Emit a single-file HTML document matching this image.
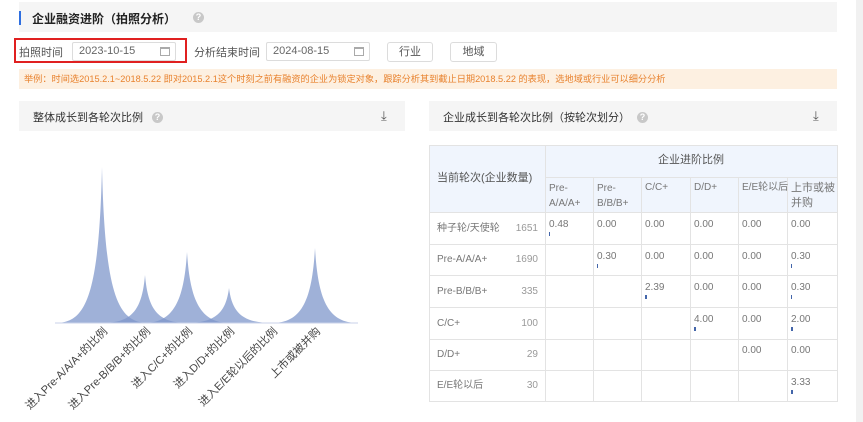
<!DOCTYPE html>
<html><head><meta charset="utf-8"><style>
*{margin:0;padding:0;box-sizing:border-box}
body{width:863px;height:422px;overflow:hidden;background:#fff;font-family:"Liberation Sans","Noto Sans CJK SC",sans-serif;position:relative;color:#333}
.abs{position:absolute;white-space:nowrap}
.bar{background:#f5f5f5}
.q{position:absolute;width:11px;height:11px;border-radius:50%;background:#c8c8c8;color:#fff;font-size:9px;line-height:11px;text-align:center;font-weight:bold}
.inp{position:absolute;border:1px solid #dcdcdc;border-radius:2px;height:19px;font-size:11px;color:#666;line-height:17px;padding-left:6px}
.cal{position:absolute;right:5px;top:4px;width:10px;height:9px;border:1px solid #aaa;border-top-width:2px}
.btn{position:absolute;border:1px solid #dcdcdc;border-radius:3px;height:20px;font-size:11px;color:#555;text-align:center;line-height:18px}
.dl{position:absolute;font-size:13px;color:#555}
.hl{position:absolute;height:1px;background:#e3e3e3}
.vl{position:absolute;width:1px;background:#e3e3e3}
.c{position:absolute;font-size:10px;color:#777;white-space:nowrap;line-height:13px}
.m{position:absolute;width:2px;height:4px;background:#4466aa}
</style></head><body>
<div class="abs" style="right:0;top:0;width:7px;height:422px;background:#f1f1f1"></div>
<div class="abs bar" style="left:19px;top:2px;width:818px;height:30px"></div>
<div class="abs" style="left:19px;top:11px;width:2px;height:14px;background:#2f6fe0"></div>
<div class="abs" style="left:32px;top:10px;font-size:12px;font-weight:bold;color:#222">企业融资进阶（拍照分析）</div>
<div class="q" style="left:193px;top:12px">?</div>
<div class="abs" style="left:14px;top:38px;width:173px;height:25px;border:2px solid #e02020"></div>
<div class="abs" style="left:19px;top:44px;font-size:11px;color:#555">拍照时间</div>
<div class="inp" style="left:72px;top:42px;width:104px">2023-10-15<span class="cal"></span></div>
<div class="abs" style="left:194px;top:44px;font-size:11px;color:#555">分析结束时间</div>
<div class="inp" style="left:266px;top:42px;width:104px">2024-08-15<span class="cal"></span></div>
<div class="btn" style="left:387px;top:42px;width:46px">行业</div>
<div class="btn" style="left:450px;top:42px;width:47px">地域</div>
<div class="abs" style="left:19px;top:69px;width:818px;height:20px;background:#fdf0e1;font-size:9.2px;color:#e8822e;line-height:20px;padding-left:5px">举例：时间选2015.2.1~2018.5.22 即对2015.2.1这个时刻之前有融资的企业为锁定对象，跟踪分析其到截止日期2018.5.22 的表现，选地域或行业可以细分分析</div>
<div class="abs bar" style="left:19px;top:101px;width:386px;height:30px"></div>
<div class="abs" style="left:33px;top:109px;font-size:11px;color:#333">整体成长到各轮次比例</div>
<div class="q" style="left:152px;top:112px">?</div>
<div class="dl" style="left:381px;top:108px">⤓</div>
<div class="abs bar" style="left:429px;top:101px;width:408px;height:30px"></div>
<div class="abs" style="left:443px;top:109px;font-size:11px;color:#333">企业成长到各轮次比例（按轮次划分）</div>
<div class="q" style="left:637px;top:112px">?</div>
<div class="dl" style="left:813px;top:108px">⤓</div>
<svg class="abs" style="left:0;top:0" width="430" height="422">
<g fill="#7f97cb" fill-opacity="0.75">
<path d="M55,323 C85,323 99,300 102,167 C105,300 119,323 149,323Z"/>
<path d="M102,323 C132,323 142,310 145,275 C148,310 158,323 188,323Z"/>
<path d="M144,323 C174,323 184,300 187,252 C190,300 200,323 230,323Z"/>
<path d="M186,323 C216,323 226,312 229,288 C232,312 242,323 272,323Z"/>
<path d="M272,323 C302,323 312,300 315,248 C318,300 328,323 358,323Z"/>
</g>
<line x1="55" y1="323" x2="358" y2="323" stroke="#c8d2ea" stroke-width="1"/>
<g font-size="11" fill="#444" font-family="Liberation Sans,Noto Sans CJK SC,sans-serif" text-anchor="end">
<text transform="translate(108,332) rotate(-45)">进入Pre-A/A/A+的比例</text>
<text transform="translate(151,332) rotate(-45)">进入Pre-B/B/B+的比例</text>
<text transform="translate(193,332) rotate(-45)">进入C/C+的比例</text>
<text transform="translate(235,332) rotate(-45)">进入D/D+的比例</text>
<text transform="translate(278,332) rotate(-45)">进入E/E轮以后的比例</text>
<text transform="translate(321,332) rotate(-45)">上市或被并购</text>
</g>
</svg>
<!-- table -->
<div class="abs" style="left:429px;top:145px;width:408px;height:67px;background:#f0f5fd"></div>
<div class="hl" style="left:429px;top:145px;width:409px"></div>
<div class="hl" style="left:545px;top:177px;width:293px"></div>
<div class="hl" style="left:429px;top:212px;width:409px"></div>
<div class="hl" style="left:429px;top:244px;width:409px"></div>
<div class="hl" style="left:429px;top:275px;width:409px"></div>
<div class="hl" style="left:429px;top:307px;width:409px"></div>
<div class="hl" style="left:429px;top:339px;width:409px"></div>
<div class="hl" style="left:429px;top:370px;width:409px"></div>
<div class="hl" style="left:429px;top:401px;width:409px"></div>
<div class="vl" style="left:429px;top:145px;height:257px"></div>
<div class="vl" style="left:545px;top:145px;height:257px"></div>
<div class="vl" style="left:593px;top:177px;height:225px"></div>
<div class="vl" style="left:641px;top:177px;height:225px"></div>
<div class="vl" style="left:690px;top:177px;height:225px"></div>
<div class="vl" style="left:738px;top:177px;height:225px"></div>
<div class="vl" style="left:787px;top:177px;height:225px"></div>
<div class="vl" style="left:837px;top:145px;height:257px"></div>
<div class="c" style="left:437px;top:172px;font-size:11px;color:#555">当前轮次(企业数量)</div>
<div class="c" style="left:545px;width:292px;text-align:center;top:154px;font-size:11px;color:#555">企业进阶比例</div>
<div class="c" style="left:549px;top:181px;line-height:15px">Pre-<br>A/A/A+</div>
<div class="c" style="left:597px;top:181px;line-height:15px">Pre-<br>B/B/B+</div>
<div class="c" style="left:645px;top:181px">C/C+</div>
<div class="c" style="left:694px;top:181px">D/D+</div>
<div class="c" style="left:742px;top:181px">E/E轮以后</div>
<div class="c" style="left:791px;top:181px;line-height:15px;font-size:11px">上市或被<br>并购</div>
<div class="c" style="left:437px;top:222px">种子轮/天使轮</div><div class="c" style="left:510px;width:28px;text-align:right;top:222px;color:#999">1651</div>
<div class="c" style="left:437px;top:253px">Pre-A/A/A+</div><div class="c" style="left:510px;width:28px;text-align:right;top:253px;color:#999">1690</div>
<div class="c" style="left:437px;top:285px">Pre-B/B/B+</div><div class="c" style="left:510px;width:28px;text-align:right;top:285px;color:#999">335</div>
<div class="c" style="left:437px;top:317px">C/C+</div><div class="c" style="left:510px;width:28px;text-align:right;top:317px;color:#999">100</div>
<div class="c" style="left:437px;top:348px">D/D+</div><div class="c" style="left:510px;width:28px;text-align:right;top:348px;color:#999">29</div>
<div class="c" style="left:437px;top:379px">E/E轮以后</div><div class="c" style="left:510px;width:28px;text-align:right;top:379px;color:#999">30</div>
<!-- values -->
<div class="c" style="left:549px;top:218px">0.48</div><div class="m" style="left:549px;top:232px;width:1px"></div>
<div class="c" style="left:597px;top:218px">0.00</div><div class="c" style="left:645px;top:218px">0.00</div><div class="c" style="left:694px;top:218px">0.00</div><div class="c" style="left:742px;top:218px">0.00</div><div class="c" style="left:791px;top:218px">0.00</div>
<div class="c" style="left:597px;top:250px">0.30</div><div class="m" style="left:597px;top:264px;width:1px"></div>
<div class="c" style="left:645px;top:250px">0.00</div><div class="c" style="left:694px;top:250px">0.00</div><div class="c" style="left:742px;top:250px">0.00</div><div class="c" style="left:791px;top:250px">0.30</div><div class="m" style="left:791px;top:264px;width:1px"></div>
<div class="c" style="left:645px;top:281px">2.39</div><div class="m" style="left:645px;top:295px"></div>
<div class="c" style="left:694px;top:281px">0.00</div><div class="c" style="left:742px;top:281px">0.00</div><div class="c" style="left:791px;top:281px">0.30</div><div class="m" style="left:791px;top:295px;width:1px"></div>
<div class="c" style="left:694px;top:313px">4.00</div><div class="m" style="left:694px;top:327px"></div>
<div class="c" style="left:742px;top:313px">0.00</div><div class="c" style="left:791px;top:313px">2.00</div><div class="m" style="left:791px;top:327px"></div>
<div class="c" style="left:742px;top:344px">0.00</div><div class="c" style="left:791px;top:344px">0.00</div>
<div class="c" style="left:791px;top:376px">3.33</div><div class="m" style="left:791px;top:390px"></div>
</body></html>
